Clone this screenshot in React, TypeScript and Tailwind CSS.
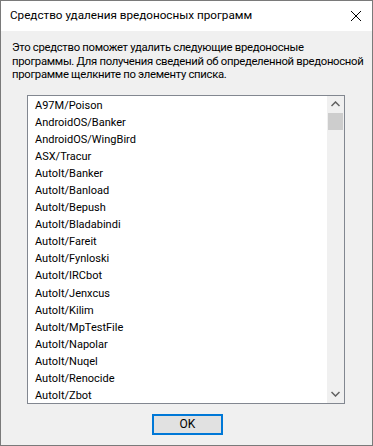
import React from "react";

const items = [
  "A97M/Poison",
  "AndroidOS/Banker",
  "AndroidOS/WingBird",
  "ASX/Tracur",
  "AutoIt/Banker",
  "AutoIt/Banload",
  "AutoIt/Bepush",
  "AutoIt/Bladabindi",
  "AutoIt/Fareit",
  "AutoIt/Fynloski",
  "AutoIt/IRCbot",
  "AutoIt/Jenxcus",
  "AutoIt/Kilim",
  "AutoIt/MpTestFile",
  "AutoIt/Napolar",
  "AutoIt/Nuqel",
  "AutoIt/Renocide",
  "AutoIt/Zbot",
];

export default function App() {
  return (
    <div
      className="w-[373px] h-[446px] border border-[#7a7a7a] bg-[#f0f0f0] flex flex-col text-black overflow-hidden"
      style={{ fontFamily: 'Roboto, "Noto Sans", sans-serif' }}
    >
      <div className="h-[30px] bg-white flex items-center justify-between pl-[9px] pr-[9px] shrink-0">
        <span className="text-[11.7px] leading-none">Средство удаления вредоносных программ</span>
        <svg width="12" height="12" viewBox="0 0 12 12" className="mr-[1px]">
          <path d="M1 1 L11 11 M11 1 L1 11" stroke="#000" strokeWidth="1" />
        </svg>
      </div>
      <div className="flex flex-col flex-1">
        <p className="text-[11.3px] tracking-[-0.3px] leading-[13.5px] pl-[11px] pr-[4px] pt-[10px] whitespace-nowrap">
          Это средство поможет удалить следующие вредоносные
          <br />
          программы. Для получения сведений об определенной вредоносной
          <br />
          программе щелкните по элементу списка.
        </p>
        <div className="ml-[26px] mr-[27px] mt-[13px] h-[309px] border border-[#828790] bg-white flex">
          <div className="flex-1 pt-[1px] overflow-hidden">
            {items.map((it) => (
              <div key={it} className="h-[17.1px] flex items-center pl-[7px] text-[11px] leading-none whitespace-nowrap">
                {it}
              </div>
            ))}
          </div>
          <div className="w-[17px] bg-[#f0f0f0] flex flex-col items-center">
            <div className="h-[17px] w-full flex items-center justify-center">
              <svg width="9" height="6" viewBox="0 0 9 6">
                <path d="M0.5 5 L4.5 1 L8.5 5" fill="none" stroke="#606060" strokeWidth="1.5" />
              </svg>
            </div>
            <div className="h-[17px] w-[15px] bg-[#cdcdcd]" />
            <div className="flex-1" />
            <div className="h-[17px] w-full flex items-center justify-center">
              <svg width="9" height="6" viewBox="0 0 9 6">
                <path d="M0.5 1 L4.5 5 L8.5 1" fill="none" stroke="#606060" strokeWidth="1.5" />
              </svg>
            </div>
          </div>
        </div>
        <div className="flex justify-center mt-[10px] pl-[2px]">
          <button className="w-[71px] h-[21px] border-2 border-[#0078d7] bg-[#e1e1e1] text-[12px] leading-none flex items-center justify-center">
            OK
          </button>
        </div>
      </div>
    </div>
  );
}
